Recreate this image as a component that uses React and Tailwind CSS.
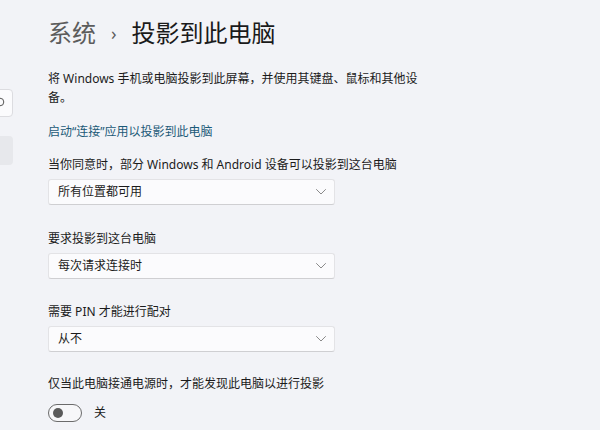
import React from 'react';

const FONT = { fontFamily: '"Noto Sans", "Noto Sans CJK SC", sans-serif' };

const Chevron = () => (
  <svg width="10" height="6" viewBox="0 0 10 6" fill="none" className="text-[#8a8a8a]">
    <path d="M0.5 0.5 L5 5 L9.5 0.5" stroke="currentColor" strokeWidth="1" strokeLinecap="round" strokeLinejoin="round" />
  </svg>
);

const Dropdown = ({ value }) => (
  <div className="mt-[5px] flex h-[26px] w-[287px] items-center justify-between rounded-[3px] border border-[#e3e3e6] border-b-[#cfcfd2] bg-[#fbfbfd] pl-[9px] pr-[8px]">
    <span className="text-[12px] leading-none text-[#1b1b1b]">{value}</span>
    <Chevron />
  </div>
);

const Label = ({ children, className = '' }) => (
  <div className={`text-[12px] leading-[18px] text-[#1b1b1b] ${className}`}>{children}</div>
);

export default function App() {
  return (
    <div className="flex h-[430px] w-[600px] overflow-hidden bg-[#f2f3f7]" style={FONT}>
      {/* Sidebar edge */}
      <div className="relative w-[14px] shrink-0 overflow-hidden">
        <div className="absolute right-[1px] top-[89px] flex h-[28px] w-[80px] items-center justify-end rounded-[4px] border border-[#dcdce0] bg-[#fbfbfd] pr-[7px]">
          <svg width="12" height="12" viewBox="0 0 12 12" fill="none" className="text-[#555]">
            <circle cx="7" cy="5" r="3.8" stroke="currentColor" strokeWidth="1" />
            <path d="M4 8 L1 11" stroke="currentColor" strokeWidth="1" />
          </svg>
        </div>
        <div className="absolute right-[1px] top-[136px] h-[29px] w-[80px] rounded-[4px] bg-[#e7e8ec]" />
      </div>

      {/* Content */}
      <div className="flex-1 pl-[34px] pt-[17px]">
        <h1 className="flex items-center text-[24px] font-normal leading-[32px]">
          <span className="text-[#5c5c5c]">系统</span>
          <span className="mx-[15px] text-[18px] text-[#5c5c5c]">›</span>
          <span className="text-[#1a1a1a]">投影到此电脑</span>
        </h1>

        <p className="mt-[20px] w-[370px] text-[12px] leading-[19px] text-[#1b1b1b]">
          将 Windows 手机或电脑投影到此屏幕，并使用其键盘、鼠标和其他设备。
        </p>

        <div className="mt-[16px] text-[12px] leading-[18px] text-[#1c5a78]">启动“连接”应用以投影到此电脑</div>

        <Label className="mt-[15px]">当你同意时，部分 Windows 和 Android 设备可以投影到这台电脑</Label>
        <Dropdown value="所有位置都可用" />

        <Label className="mt-[25px]">要求投影到这台电脑</Label>
        <Dropdown value="每次请求连接时" />

        <Label className="mt-[24px]">需要 PIN 才能进行配对</Label>
        <Dropdown value="从不" />

        <Label className="mt-[23px]">仅当此电脑接通电源时，才能发现此电脑以进行投影</Label>
        <div className="mt-[11px] flex items-center">
          <div className="flex h-[18px] w-[34px] items-center rounded-full border border-[#6b6b6b] bg-[#f7f7f9] pl-[4px]">
            <div className="h-[10px] w-[10px] rounded-full bg-[#5a5a5a]" />
          </div>
          <span className="ml-[12px] text-[12px] text-[#1b1b1b]">关</span>
        </div>
      </div>
    </div>
  );
}
